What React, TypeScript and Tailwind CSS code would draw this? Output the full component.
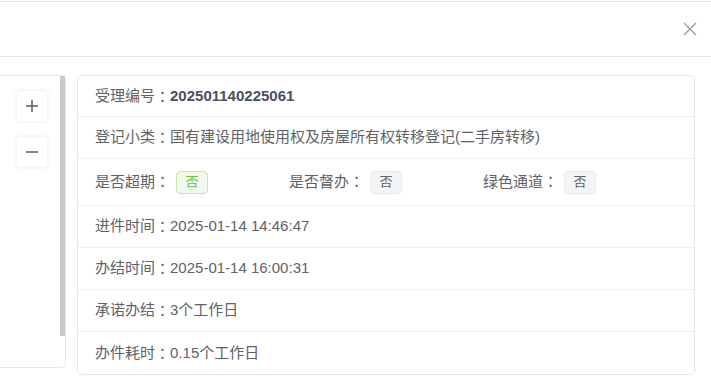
import React from 'react'

type Row = { label: string; value: string }

const rows: Row[] = [
  { label: '进件时间', value: '2025-01-14 14:46:47' },
  { label: '办结时间', value: '2025-01-14 16:00:31' },
  { label: '承诺办结', value: '3个工作日' },
  { label: '办件耗时', value: '0.15个工作日' },
]

// centred full-width colon, as in the original font
function Colon() {
  return <span style={{ fontFamily: '"Noto Sans CJK TC", sans-serif' }}>：</span>
}

function Tag({ text, success }: { text: string; success?: boolean }) {
  return (
    <span
      className={`inline-flex h-[23px] w-[32px] items-center justify-center rounded-[4px] border text-[13px] ${
        success
          ? 'border-[#c2e7b0] bg-[#f0f9eb] text-[#67c23a]'
          : 'border-[#e9e9eb] bg-[#f4f4f5] text-[#606266]'
      }`}
    >
      {text}
    </span>
  )
}

function ZoomButton({ minus }: { minus?: boolean }) {
  return (
    <button className="flex h-[30px] w-[30px] items-center justify-center bg-white shadow-[0_0_4px_rgba(0,0,0,0.1)]">
      <svg width="14" height="14" viewBox="0 0 14 14" fill="none" stroke="#5f6575" strokeWidth="1.6">
        <path d="M1 7h12" />
        {!minus && <path d="M7 1v12" />}
      </svg>
    </button>
  )
}

export default function App() {
  return (
    <div
      className="h-[385px] w-[711px] overflow-hidden bg-white text-[15px] text-[#606266]"
      style={{ fontFamily: '"Liberation Sans", "Noto Sans CJK SC", sans-serif' }}
    >
      <div className="h-px" />
      {/* Header */}
      <div className="flex h-[56px] items-center justify-end border-y border-[#e4e7ed] pr-[14px]">
        <svg width="14" height="14" viewBox="0 0 14 14" fill="none" stroke="#909399" strokeWidth="1.1">
          <path d="M1 1l12 12M13 1L1 13" />
        </svg>
      </div>

      {/* Body */}
      <div className="flex gap-[11px] pt-[18px]">
        {/* Map / preview panel */}
        <div className="flex h-[293px] w-[66px] shrink-0 justify-end rounded-r-[5px] border border-l-0 border-[#e4e7ed]">
          <div className="flex flex-col gap-[16px] pr-[13px] pt-[15px]">
            <ZoomButton />
            <ZoomButton minus />
          </div>
          <div className="h-[260px] w-[5px] bg-[#c8c8c8]" />
        </div>

        {/* Info card */}
        <div className="w-[618px] rounded-[5px] border border-[#e4e7ed]">
          <div className="flex h-[41px] items-center border-b border-[#ebeef5] px-[17px]">
            受理编号<Colon />
            <span className="font-bold text-[#4a5060]">202501140225061</span>
          </div>
          <div className="flex h-[42px] items-center border-b border-[#ebeef5] px-[17px]">
            登记小类<Colon />国有建设用地使用权及房屋所有权转移登记(二手房转移)
          </div>
          <div className="grid h-[47px] grid-cols-3 items-center border-b border-[#ebeef5] px-[17px]">
            <div className="flex items-center gap-[6px]">
              <span>是否超期<Colon /></span>
              <Tag text="否" success />
            </div>
            <div className="flex items-center gap-[6px]">
              <span>是否督办<Colon /></span>
              <Tag text="否" />
            </div>
            <div className="flex items-center gap-[6px]">
              <span>绿色通道<Colon /></span>
              <Tag text="否" />
            </div>
          </div>
          {rows.map((r, i) => (
            <div
              key={r.label}
              className={`flex h-[42px] items-center px-[17px] ${
                i < rows.length - 1 ? 'border-b border-[#ebeef5]' : ''
              }`}
            >
              {r.label}
              <Colon />
              {r.value}
            </div>
          ))}
        </div>
      </div>
    </div>
  )
}
